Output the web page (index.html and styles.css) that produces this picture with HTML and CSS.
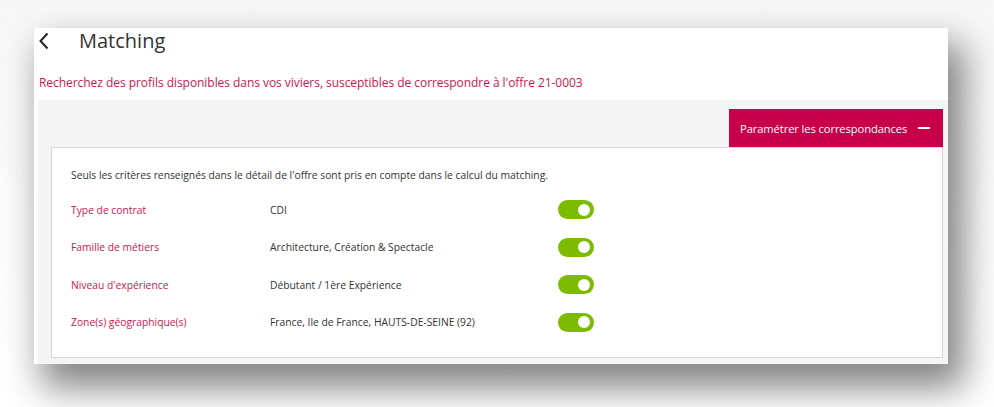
FILE: index.html
```html
<!DOCTYPE html>
<html lang="fr">
<head>
<meta charset="utf-8">
<title>Matching</title>
<link rel="stylesheet" href="styles.css">
</head>
<body>
<div class="panel">
  <div class="header">
    <svg class="back" width="12" height="18" viewBox="0 0 12 18"><path d="M9.5 1.5 L2.5 9 L9.5 16.5" fill="none" stroke="#222" stroke-width="2"/></svg>
    <h1 class="title">Matching</h1>
  </div>
  <p class="subtitle">Recherchez des profils disponibles dans vos viviers, susceptibles de correspondre à l'offre 21-0003</p>
  <div class="zone">
    <div class="btn-row">
      <div class="btn">Paramétrer les correspondances <span class="minus"></span></div>
    </div>
    <div class="box">
      <p class="note">Seuls les critères renseignés dans le détail de l'offre sont pris en compte dans le calcul du matching.</p>
      <div class="row"><span class="label">Type de contrat</span><span class="value">CDI</span><span class="toggle"><span class="knob"></span></span></div>
      <div class="row"><span class="label">Famille de métiers</span><span class="value">Architecture, Création &amp; Spectacle</span><span class="toggle"><span class="knob"></span></span></div>
      <div class="row"><span class="label">Niveau d'expérience</span><span class="value">Débutant / 1ère Expérience</span><span class="toggle"><span class="knob"></span></span></div>
      <div class="row"><span class="label">Zone(s) géographique(s)</span><span class="value">France, Ile de France, HAUTS-DE-SEINE (92)</span><span class="toggle"><span class="knob"></span></span></div>
    </div>
  </div>
</div>
</body>
</html>
```
FILE: styles.css
```css
html, body {
  margin: 0;
  padding: 0;
  overflow: hidden;
}
body {
  width: 994px;
  height: 407px;
  font-family: "Open Sans", "Noto Sans", sans-serif;
  background: linear-gradient(#f7f7f7, #ffffff);
  padding-top: 28px;
  box-sizing: border-box;
}
.panel {
  margin-left: 34px;
  width: 914px;
  height: 336px;
  background: #fff;
  box-shadow: 12px 20px 34px 4px rgba(0,0,0,0.48);
  display: flex;
  flex-direction: column;
}
.header {
  display: flex;
  align-items: center;
  height: 26px;
  padding-left: 4px;
}
.back {
  display: block;
}
.title {
  margin: 0 0 0 29px;
  font-size: 20px;
  font-weight: 400;
  color: #333;
  line-height: 26px;
}
.subtitle {
  margin: 20px 0 0 5px;
  font-size: 12px;
  letter-spacing: -0.05px;
  line-height: 18px;
  color: #c8174f;
}
.zone {
  margin: 8px 0 0 4px;
  flex: 1;
  background: #f5f5f5;
  padding: 9px 5px 6px 13px;
  display: flex;
  flex-direction: column;
}
.btn-row {
  display: flex;
  justify-content: flex-end;
}
.btn {
  width: 214px;
  height: 38px;
  box-sizing: border-box;
  background: #c8004a;
  color: #fff;
  font-size: 11.2px;
  letter-spacing: -0.1px;
  white-space: nowrap;
  display: flex;
  align-items: center;
  padding-left: 11px;
  gap: 11px;
}
.minus {
  display: block;
  width: 12px;
  height: 2px;
  background: #fff;
}
.box {
  flex: 1;
  background: #fff;
  border: 1px solid #d6d6d6;
  padding: 19px 0 0 19px;
}
.note {
  margin: 0 0 8px 0;
  font-size: 10.3px;
  line-height: 16px;
  color: #333;
}
.row {
  display: flex;
  align-items: center;
  height: 37.5px;
  font-size: 10.3px;
  color: #333;
}
.label {
  width: 199px;
  color: #c8174f;
}
.value {
  width: 288px;
}
.toggle {
  width: 36px;
  height: 19px;
  border-radius: 10px;
  background: #7cbb00;
  display: flex;
  align-items: center;
  justify-content: flex-end;
  padding-right: 4px;
  box-sizing: border-box;
}
.knob {
  width: 12px;
  height: 12px;
  border-radius: 50%;
  background: #fff;
}
```
